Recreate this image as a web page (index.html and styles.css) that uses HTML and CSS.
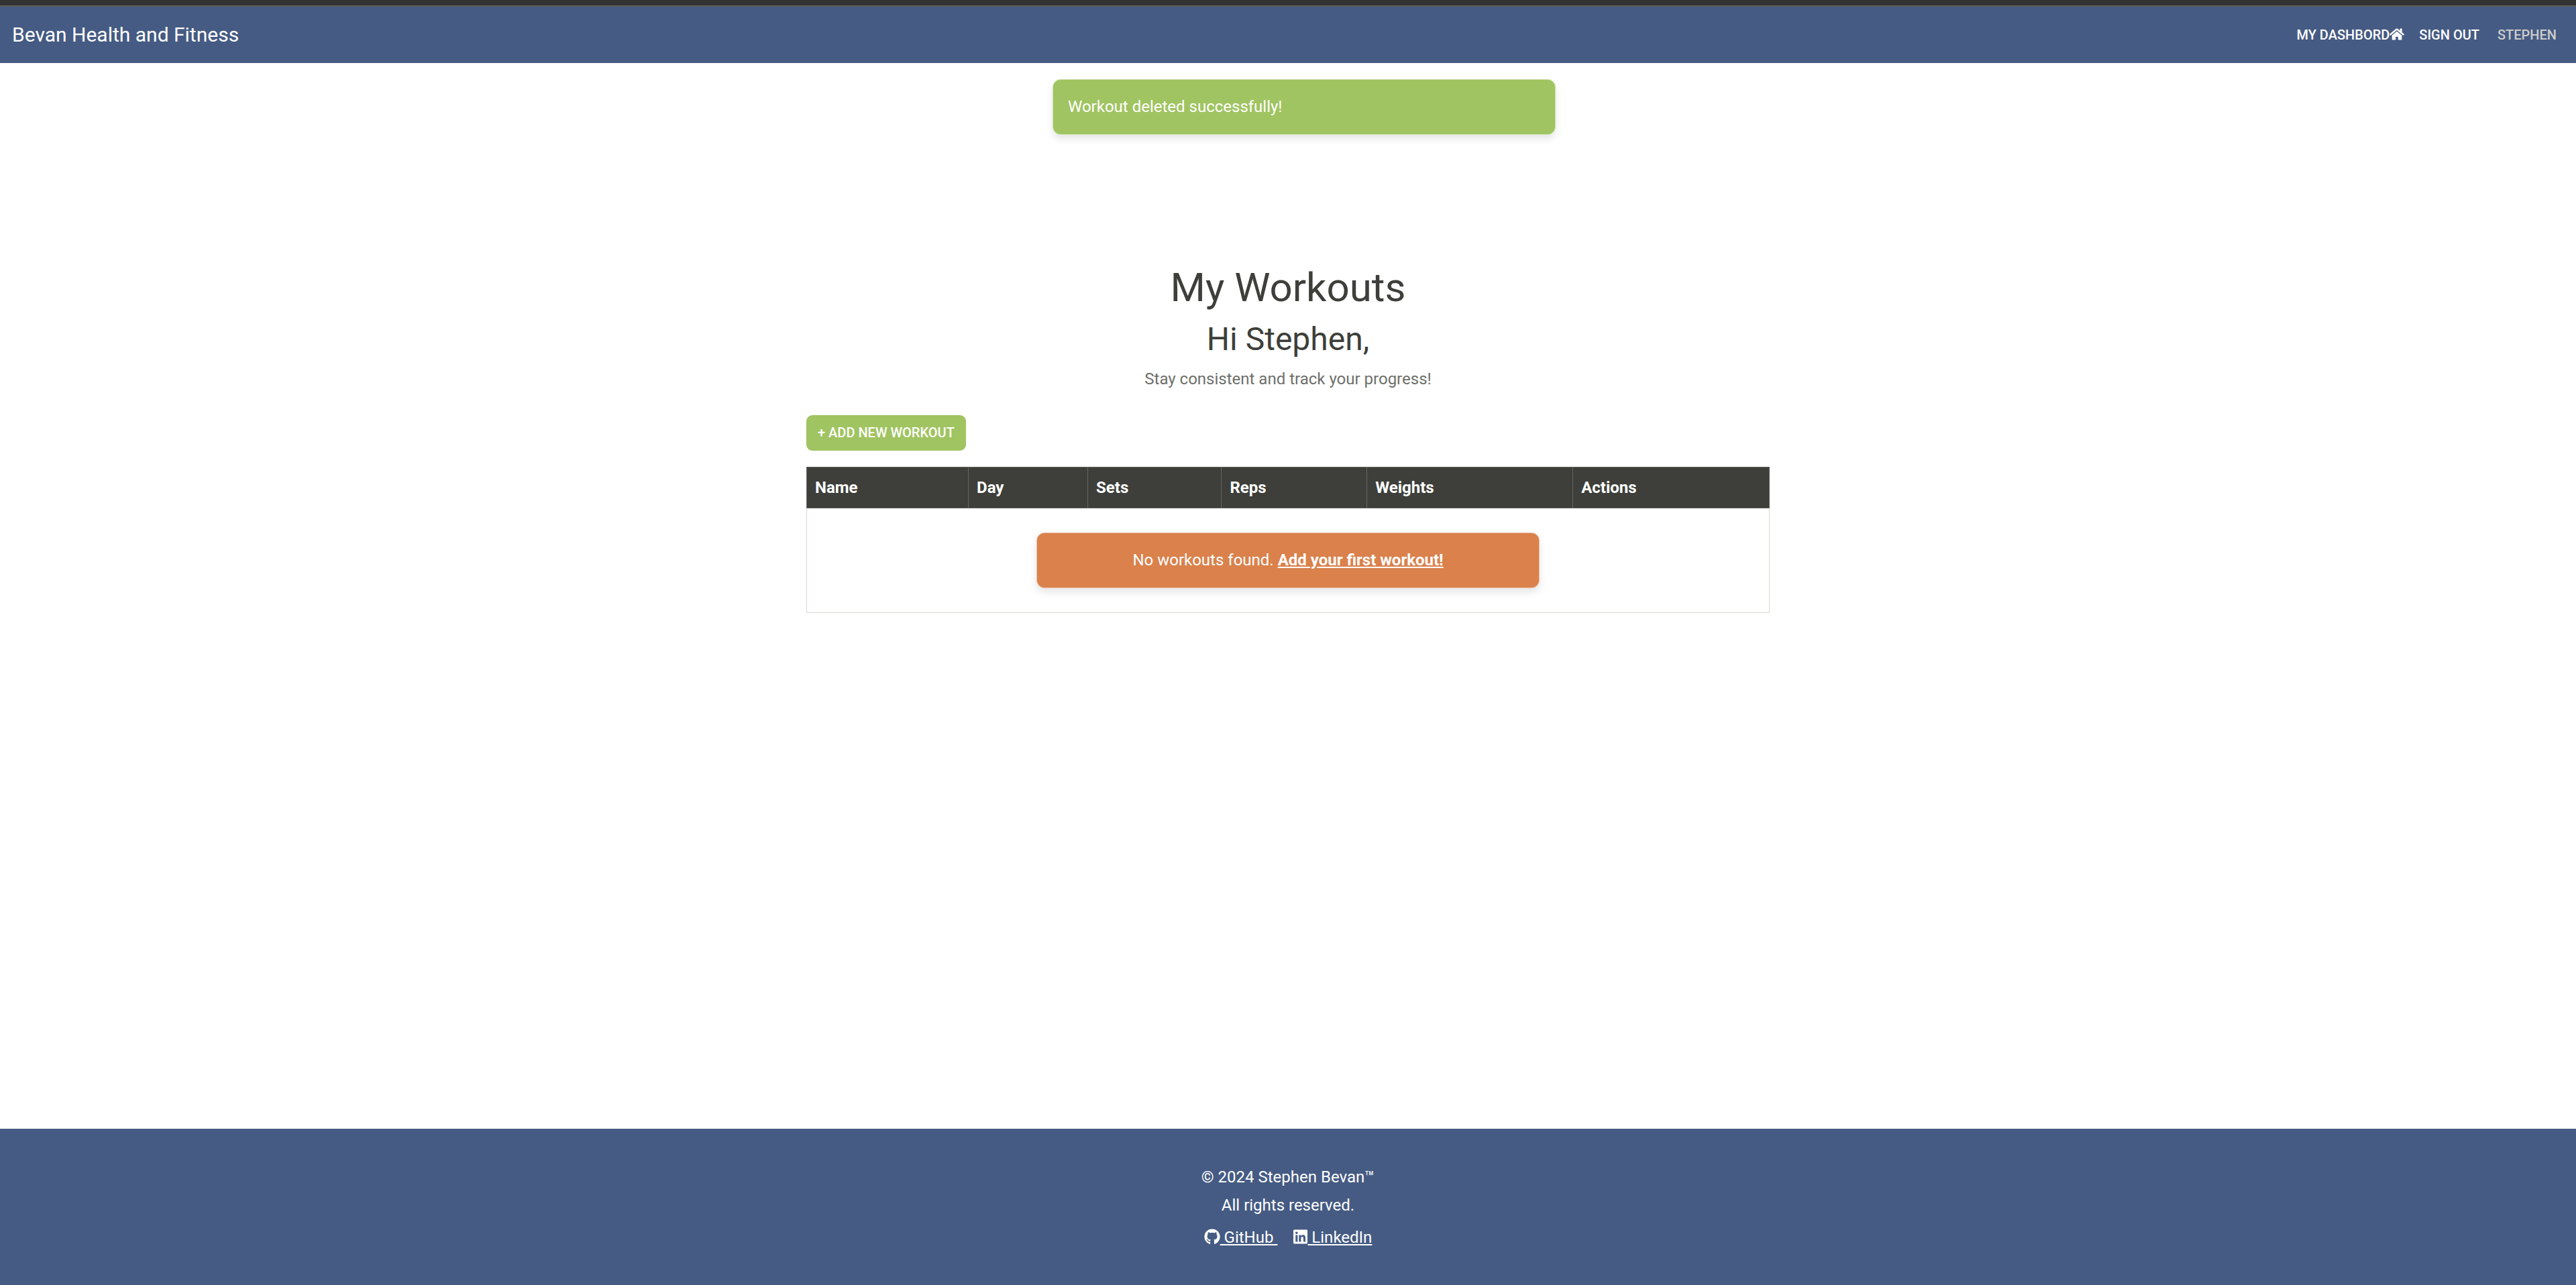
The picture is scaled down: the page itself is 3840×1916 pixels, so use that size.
FILE: index.html
```html
<!DOCTYPE html>
<html lang="en">
<head>
<meta charset="utf-8">
<meta name="viewport" content="width=device-width, initial-scale=1">
<title>My Workouts - Bevan Health and Fitness</title>
<link rel="stylesheet" href="styles.css">
</head>
<body>
<header class="navbar">
  <a class="brand" href="#">Bevan Health and Fitness</a>
  <nav class="nav" aria-label="Main">
    <a class="nav-link" href="#">My Dashbord<svg class="icon icon-home" viewBox="0 0 576 512" aria-hidden="true"><path d="M280.37 148.26L96 300.11V464a16 16 0 0 0 16 16l112.06-.29a16 16 0 0 0 15.92-16V368a16 16 0 0 1 16-16h64a16 16 0 0 1 16 16v95.64a16 16 0 0 0 16 16.05L464 480a16 16 0 0 0 16-16V300L295.67 148.26a12.19 12.19 0 0 0-15.3 0zM571.6 251.47L488 182.56V44.05a12 12 0 0 0-12-12h-56a12 12 0 0 0-12 12v72.61L318.47 43a48 48 0 0 0-61 0L4.34 251.47a12 12 0 0 0-1.6 16.9l25.5 31A12 12 0 0 0 45.15 301l235.22-193.74a12.19 12.19 0 0 1 15.3 0L530.9 301a12 12 0 0 0 16.9-1.6l25.5-31a12 12 0 0 0-1.7-16.93z"/></svg></a>
    <a class="nav-link" href="#">Sign Out</a>
    <span class="nav-user">Stephen</span>
  </nav>
</header>

<ul class="messages">
  <li class="alert alert-success">Workout deleted successfully!</li>
</ul>

<main class="container">
  <h1 class="title">My Workouts</h1>
  <h2 class="greeting">Hi Stephen,</h2>
  <p class="lead">Stay consistent and track your progress!</p>
  <button class="btn" type="button">+ Add New Workout</button>
  <table class="workouts">
    <colgroup>
      <col class="col-name"><col class="col-day"><col class="col-sets"><col class="col-reps"><col class="col-weights"><col>
    </colgroup>
    <thead>
      <tr><th scope="col">Name</th><th scope="col">Day</th><th scope="col">Sets</th><th scope="col">Reps</th><th scope="col">Weights</th><th scope="col">Actions</th></tr>
    </thead>
    <tbody>
      <tr><td colspan="6"><div class="alert alert-empty">No workouts found. <a href="#">Add your first workout!</a></div></td></tr>
    </tbody>
  </table>
</main>

<footer class="footer">
  <p>© 2024 Stephen Bevan™</p>
  <p>All rights reserved.</p>
  <div class="social">
    <a href="#"><svg class="icon icon-github" viewBox="0 0 496 512" aria-hidden="true"><path d="M165.9 397.4c0 2-2.3 3.6-5.2 3.6-3.3.3-5.6-1.3-5.6-3.6 0-2 2.3-3.6 5.2-3.6 3-.3 5.6 1.3 5.6 3.6zm-31.1-4.5c-.7 2 1.3 4.3 4.3 4.9 2.6 1 5.6 0 6.2-2s-1.3-4.3-4.3-5.2c-2.6-.7-5.5.3-6.2 2.3zm44.2-1.7c-2.9.7-4.9 2.6-4.6 4.9.3 2 2.9 3.3 5.9 2.6 2.9-.7 4.9-2.6 4.6-4.6-.3-1.9-3-3.2-5.9-2.9zM244.8 8C106.1 8 0 113.3 0 252c0 110.9 69.8 205.8 169.5 239.2 12.8 2.3 17.3-5.6 17.3-12.1 0-6.2-.3-40.4-.3-61.4 0 0-70 15-84.7-29.8 0 0-11.4-29.1-27.8-36.6 0 0-22.9-15.7 1.6-15.4 0 0 24.9 2 38.6 25.8 21.9 38.6 58.6 27.5 72.9 20.9 2.3-16 8.8-27.1 16-33.7-55.9-6.2-112.3-14.3-112.3-110.5 0-27.5 7.6-41.3 23.6-58.9-2.6-6.5-11.1-33.3 2.6-67.9 20.9-6.5 69 27 69 27 20-5.6 41.5-8.5 62.8-8.5s42.8 2.9 62.8 8.5c0 0 48.1-33.6 69-27 13.7 34.7 5.2 61.4 2.6 67.9 16 17.7 25.8 31.5 25.8 58.9 0 96.5-58.9 104.2-114.8 110.5 9.2 7.9 17 22.9 17 46.4 0 33.7-.3 75.4-.3 83.6 0 6.5 4.6 14.4 17.3 12.1C428.2 457.8 496 362.9 496 252 496 113.3 383.5 8 244.8 8z"/></svg> GitHub&nbsp;</a>
    <a href="#"><svg class="icon icon-linkedin" viewBox="0 0 448 512" aria-hidden="true"><path d="M416 32H31.9C14.3 32 0 46.5 0 64.3v383.4C0 465.5 14.3 480 31.9 480H416c17.6 0 32-14.5 32-32.3V64.3c0-17.8-14.4-32.3-32-32.3zM135.4 416H69V202.2h66.5V416zm-33.2-243c-21.3 0-38.5-17.3-38.5-38.5S80.9 96 102.2 96c21.2 0 38.5 17.3 38.5 38.5 0 21.3-17.2 38.5-38.5 38.5zm282.1 243h-66.4V312c0-24.8-.5-56.7-34.5-56.7-34.6 0-39.9 27-39.9 54.9V416h-66.4V202.2h63.7v29.2h.9c8.9-16.8 30.6-34.5 62.2-34.5 66.5 0 78.9 43.8 78.9 101.9V416z"/></svg> LinkedIn</a>
  </div>
</footer>
</body>
</html>
```
FILE: styles.css
```css
*, *::before, *::after { box-sizing: border-box; }

body {
  display: flex;
  flex-direction: column;
  min-height: 100vh;
  margin: 0;
  border-top: 8px solid #333;
  background: #fff;
  color: #3e3f3a;
  font: 400 24px/36px Roboto, "Liberation Sans", sans-serif;
}

h1, h2, p, ul { margin: 0; padding: 0; }

.icon { fill: currentColor; }

/* Navigation */
.navbar {
  display: flex;
  align-items: center;
  justify-content: space-between;
  height: 86px;
  padding: 0 18px;
  border-top: 2px solid #5f5f5b;
  background: #455b83;
  color: #fff;
}
.brand { color: #fff; font-size: 30px; text-decoration: none; }
.nav {
  display: flex;
  font-size: 20px;
  font-weight: 500;
  text-transform: uppercase;
}
.nav-link { padding: 0 11px; color: #fff; text-decoration: none; }
.nav-user { padding: 0 11px 0 16px; color: #ccc; }
.icon-home { width: 22px; height: 20px; vertical-align: -2px; }

/* Alerts */
.messages {
  padding: 24px 0 0 48px;
  list-style: none;
}
.alert {
  max-width: 750px;
  margin: 0 auto;
  padding: 24px 22px;
  border: 1px solid;
  border-radius: 12px;
  color: #fff;
  line-height: 33px;
  box-shadow: 0 6px 12px rgba(0, 0, 0, 0.1);
}
.alert-success { border-color: #cfe2b0; background: #a0c461; }
.alert-empty {
  margin: 24px auto;
  border-color: #edc0a5;
  background: #da814c;
  text-align: center;
}
.alert a { color: #fff; font-weight: 700; }

/* Workouts */
.container {
  flex: 1;
  width: 100%;
  max-width: 1436px;
  margin: 192px auto 48px;
}
.title {
  margin-bottom: 12px;
  font-size: 60px;
  font-weight: 400;
  line-height: 72px;
  text-align: center;
}
.greeting {
  margin-bottom: 12px;
  font-size: 48px;
  font-weight: 400;
  line-height: 58px;
  text-align: center;
}
.lead { margin-bottom: 36px; color: #6e6f6b; text-align: center; }
.btn {
  display: block;
  margin-bottom: 24px;
  padding: 12px 17px;
  border: 0;
  border-radius: 9px;
  background: #a0c461;
  color: #fff;
  font: 500 20px/29px Roboto, "Liberation Sans", sans-serif;
  text-transform: uppercase;
}
.workouts {
  width: 100%;
  border-collapse: collapse;
  table-layout: fixed;
}
.workouts th {
  padding: 12px;
  border: 1px solid #656661;
  background: #3e3f3a;
  color: #fff;
  font-weight: 700;
  text-align: left;
}
.workouts td { padding: 12px; border: 1px solid #dbd7ce; }
.col-name { width: 16.8%; }
.col-day { width: 12.4%; }
.col-sets { width: 13.9%; }
.col-reps { width: 15.1%; }
.col-weights { width: 21.4%; }

/* Footer */
.footer {
  display: flex;
  flex-direction: column;
  align-items: center;
  gap: 6px;
  padding: 54px 24px 53px;
  background: #455b83;
  color: #fff;
}
.social { display: flex; gap: 24px; margin-top: 6px; }
.social a { color: #fff; }
.icon-github, .icon-linkedin { height: 24px; vertical-align: -3px; }
.icon-github { width: 24px; }
.icon-linkedin { width: 21px; }
```
